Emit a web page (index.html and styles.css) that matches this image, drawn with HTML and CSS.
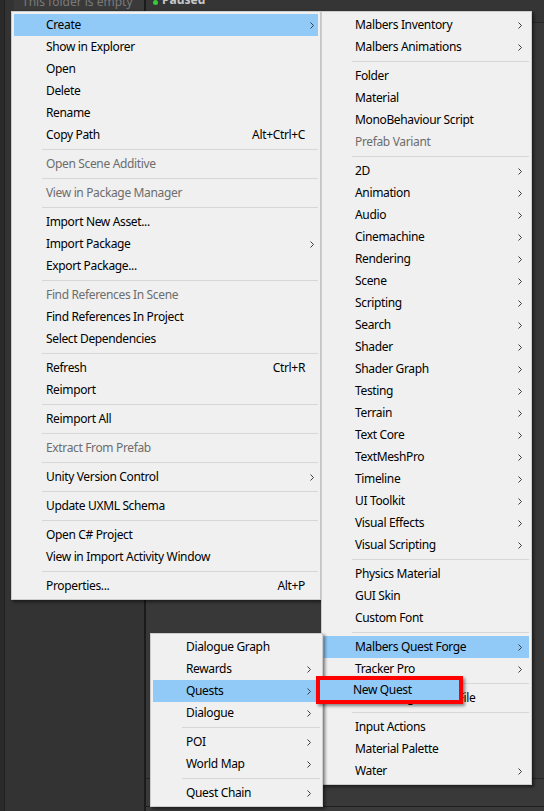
FILE: index.html
```html
<!DOCTYPE html>
<html>
<head>
<meta charset="utf-8">
<link rel="stylesheet" href="styles.css">
</head>
<body>
<div class="screen">
  <div class="edge"></div>
  <div class="left-pane">
    <div class="empty-label">This folder is empty</div>
  </div>
  <div class="divider"></div>
  <div class="right-pane">
    <div class="top-bar"><span class="dot"></span><span class="status">Paused</span></div>
    <div class="content"></div>
    <div class="bottom-bar"><span class="bar-icon"></span></div>
    <div class="footer"></div>
  </div>

  <div class="menu menu-main">
    <div class="item hl"><span class="label">Create</span><span class="arrow"><svg width="4" height="7" viewBox="0 0 4 7"><path d="M0.5 0.5 L3.5 3.5 L0.5 6.5" /></svg></span></div>
    <div class="item"><span class="label">Show in Explorer</span></div>
    <div class="item"><span class="label">Open</span></div>
    <div class="item"><span class="label">Delete</span></div>
    <div class="item"><span class="label">Rename</span></div>
    <div class="item"><span class="label">Copy Path</span><span class="shortcut">Alt+Ctrl+C</span></div>
    <div class="sep"></div>
    <div class="item disabled"><span class="label">Open Scene Additive</span></div>
    <div class="sep"></div>
    <div class="item disabled"><span class="label">View in Package Manager</span></div>
    <div class="sep"></div>
    <div class="item"><span class="label">Import New Asset...</span></div>
    <div class="item"><span class="label">Import Package</span><span class="arrow"><svg width="4" height="7" viewBox="0 0 4 7"><path d="M0.5 0.5 L3.5 3.5 L0.5 6.5" /></svg></span></div>
    <div class="item"><span class="label">Export Package...</span></div>
    <div class="sep"></div>
    <div class="item disabled"><span class="label">Find References In Scene</span></div>
    <div class="item"><span class="label">Find References In Project</span></div>
    <div class="item"><span class="label">Select Dependencies</span></div>
    <div class="sep"></div>
    <div class="item"><span class="label">Refresh</span><span class="shortcut">Ctrl+R</span></div>
    <div class="item"><span class="label">Reimport</span></div>
    <div class="sep"></div>
    <div class="item"><span class="label">Reimport All</span></div>
    <div class="sep"></div>
    <div class="item disabled"><span class="label">Extract From Prefab</span></div>
    <div class="sep"></div>
    <div class="item"><span class="label">Unity Version Control</span><span class="arrow"><svg width="4" height="7" viewBox="0 0 4 7"><path d="M0.5 0.5 L3.5 3.5 L0.5 6.5" /></svg></span></div>
    <div class="sep"></div>
    <div class="item"><span class="label">Update UXML Schema</span></div>
    <div class="sep"></div>
    <div class="item"><span class="label">Open C# Project</span></div>
    <div class="item"><span class="label">View in Import Activity Window</span></div>
    <div class="sep"></div>
    <div class="item"><span class="label">Properties...</span><span class="shortcut">Alt+P</span></div>
  </div>

  <div class="menu menu-create">
    <div class="item"><span class="label">Malbers Inventory</span><span class="arrow"><svg width="4" height="7" viewBox="0 0 4 7"><path d="M0.5 0.5 L3.5 3.5 L0.5 6.5" /></svg></span></div>
    <div class="item"><span class="label">Malbers Animations</span><span class="arrow"><svg width="4" height="7" viewBox="0 0 4 7"><path d="M0.5 0.5 L3.5 3.5 L0.5 6.5" /></svg></span></div>
    <div class="sep"></div>
    <div class="item"><span class="label">Folder</span></div>
    <div class="item"><span class="label">Material</span></div>
    <div class="item"><span class="label">MonoBehaviour Script</span></div>
    <div class="item disabled"><span class="label">Prefab Variant</span></div>
    <div class="sep"></div>
    <div class="item"><span class="label">2D</span><span class="arrow"><svg width="4" height="7" viewBox="0 0 4 7"><path d="M0.5 0.5 L3.5 3.5 L0.5 6.5" /></svg></span></div>
    <div class="item"><span class="label">Animation</span><span class="arrow"><svg width="4" height="7" viewBox="0 0 4 7"><path d="M0.5 0.5 L3.5 3.5 L0.5 6.5" /></svg></span></div>
    <div class="item"><span class="label">Audio</span><span class="arrow"><svg width="4" height="7" viewBox="0 0 4 7"><path d="M0.5 0.5 L3.5 3.5 L0.5 6.5" /></svg></span></div>
    <div class="item"><span class="label">Cinemachine</span><span class="arrow"><svg width="4" height="7" viewBox="0 0 4 7"><path d="M0.5 0.5 L3.5 3.5 L0.5 6.5" /></svg></span></div>
    <div class="item"><span class="label">Rendering</span><span class="arrow"><svg width="4" height="7" viewBox="0 0 4 7"><path d="M0.5 0.5 L3.5 3.5 L0.5 6.5" /></svg></span></div>
    <div class="item"><span class="label">Scene</span><span class="arrow"><svg width="4" height="7" viewBox="0 0 4 7"><path d="M0.5 0.5 L3.5 3.5 L0.5 6.5" /></svg></span></div>
    <div class="item"><span class="label">Scripting</span><span class="arrow"><svg width="4" height="7" viewBox="0 0 4 7"><path d="M0.5 0.5 L3.5 3.5 L0.5 6.5" /></svg></span></div>
    <div class="item"><span class="label">Search</span><span class="arrow"><svg width="4" height="7" viewBox="0 0 4 7"><path d="M0.5 0.5 L3.5 3.5 L0.5 6.5" /></svg></span></div>
    <div class="item"><span class="label">Shader</span><span class="arrow"><svg width="4" height="7" viewBox="0 0 4 7"><path d="M0.5 0.5 L3.5 3.5 L0.5 6.5" /></svg></span></div>
    <div class="item"><span class="label">Shader Graph</span><span class="arrow"><svg width="4" height="7" viewBox="0 0 4 7"><path d="M0.5 0.5 L3.5 3.5 L0.5 6.5" /></svg></span></div>
    <div class="item"><span class="label">Testing</span><span class="arrow"><svg width="4" height="7" viewBox="0 0 4 7"><path d="M0.5 0.5 L3.5 3.5 L0.5 6.5" /></svg></span></div>
    <div class="item"><span class="label">Terrain</span><span class="arrow"><svg width="4" height="7" viewBox="0 0 4 7"><path d="M0.5 0.5 L3.5 3.5 L0.5 6.5" /></svg></span></div>
    <div class="item"><span class="label">Text Core</span><span class="arrow"><svg width="4" height="7" viewBox="0 0 4 7"><path d="M0.5 0.5 L3.5 3.5 L0.5 6.5" /></svg></span></div>
    <div class="item"><span class="label">TextMeshPro</span><span class="arrow"><svg width="4" height="7" viewBox="0 0 4 7"><path d="M0.5 0.5 L3.5 3.5 L0.5 6.5" /></svg></span></div>
    <div class="item"><span class="label">Timeline</span><span class="arrow"><svg width="4" height="7" viewBox="0 0 4 7"><path d="M0.5 0.5 L3.5 3.5 L0.5 6.5" /></svg></span></div>
    <div class="item"><span class="label">UI Toolkit</span><span class="arrow"><svg width="4" height="7" viewBox="0 0 4 7"><path d="M0.5 0.5 L3.5 3.5 L0.5 6.5" /></svg></span></div>
    <div class="item"><span class="label">Visual Effects</span><span class="arrow"><svg width="4" height="7" viewBox="0 0 4 7"><path d="M0.5 0.5 L3.5 3.5 L0.5 6.5" /></svg></span></div>
    <div class="item"><span class="label">Visual Scripting</span><span class="arrow"><svg width="4" height="7" viewBox="0 0 4 7"><path d="M0.5 0.5 L3.5 3.5 L0.5 6.5" /></svg></span></div>
    <div class="sep"></div>
    <div class="item"><span class="label">Physics Material</span></div>
    <div class="item"><span class="label">GUI Skin</span></div>
    <div class="item"><span class="label">Custom Font</span></div>
    <div class="sep"></div>
    <div class="item hl"><span class="label">Malbers Quest Forge</span><span class="arrow"><svg width="4" height="7" viewBox="0 0 4 7"><path d="M0.5 0.5 L3.5 3.5 L0.5 6.5" /></svg></span></div>
    <div class="item"><span class="label">Tracker Pro</span><span class="arrow"><svg width="4" height="7" viewBox="0 0 4 7"><path d="M0.5 0.5 L3.5 3.5 L0.5 6.5" /></svg></span></div>
    <div class="sep"></div>
    <div class="item"><span class="label">Quest Forge Saved File</span></div>
    <div class="sep"></div>
    <div class="item"><span class="label">Input Actions</span></div>
    <div class="item"><span class="label">Material Palette</span></div>
    <div class="item"><span class="label">Water</span><span class="arrow"><svg width="4" height="7" viewBox="0 0 4 7"><path d="M0.5 0.5 L3.5 3.5 L0.5 6.5" /></svg></span></div>
  </div>

  <div class="menu menu-quest">
    <div class="item"><span class="label">Dialogue Graph</span></div>
    <div class="item"><span class="label">Rewards</span><span class="arrow"><svg width="4" height="7" viewBox="0 0 4 7"><path d="M0.5 0.5 L3.5 3.5 L0.5 6.5" /></svg></span></div>
    <div class="item hl"><span class="label">Quests</span><span class="arrow"><svg width="4" height="7" viewBox="0 0 4 7"><path d="M0.5 0.5 L3.5 3.5 L0.5 6.5" /></svg></span></div>
    <div class="item"><span class="label">Dialogue</span><span class="arrow"><svg width="4" height="7" viewBox="0 0 4 7"><path d="M0.5 0.5 L3.5 3.5 L0.5 6.5" /></svg></span></div>
    <div class="sep"></div>
    <div class="item"><span class="label">POI</span><span class="arrow"><svg width="4" height="7" viewBox="0 0 4 7"><path d="M0.5 0.5 L3.5 3.5 L0.5 6.5" /></svg></span></div>
    <div class="item"><span class="label">World Map</span><span class="arrow"><svg width="4" height="7" viewBox="0 0 4 7"><path d="M0.5 0.5 L3.5 3.5 L0.5 6.5" /></svg></span></div>
    <div class="sep"></div>
    <div class="item"><span class="label">Quest Chain</span><span class="arrow"><svg width="4" height="7" viewBox="0 0 4 7"><path d="M0.5 0.5 L3.5 3.5 L0.5 6.5" /></svg></span></div>
  </div>

  <div class="new-quest"><span class="label">New Quest</span></div>
</div>
</body>
</html>
```

FILE: styles.css
```css
html, body {
  margin: 0;
  padding: 0;
}
body {
  background: #333333;
  font-family: "Segoe UI", "Noto Sans", sans-serif;
}
.screen {
  position: relative;
  width: 544px;
  height: 811px;
  overflow: hidden;
  display: flex;
  background: #383838;
}
.edge {
  width: 4px;
  background: #2a2a2a;
  border-right: 1px solid #202020;
}
.left-pane {
  width: 139px;
  background: #333333;
}
.empty-label {
  margin: -6px 0 0 9px;
  width: 126px;
  padding-left: 8px;
  line-height: 16px;
  height: 16px;
  font-size: 12px;
  color: #7a7a7a;
  background: #3a3a3a;
}
.divider {
  width: 2px;
  background: #1b1b1b;
}
.right-pane {
  flex: 1;
  display: flex;
  flex-direction: column;
}
.top-bar {
  height: 29px;
  border-bottom: 1px solid #262626;
  background: #353535;
  display: flex;
  align-items: flex-start;
  margin-top: -7px;
  padding-left: 7px;
  gap: 4px;
}
.dot {
  width: 5px;
  height: 5px;
  border-radius: 50%;
  background: #38c938;
  margin-top: 7px;
}
.status {
  font-size: 12px;
  font-weight: bold;
  color: #c8c8c8;
  line-height: 14px;
}
.content {
  flex: 1;
  background: #383838;
}
.bottom-bar {
  height: 27px;
  border-top: 1px solid #262626;
  border-bottom: 1px solid #1f1f1f;
  background: #393939;
  display: flex;
  align-items: center;
  padding-left: 4px;
}
.bar-icon {
  width: 6px;
  height: 6px;
  background: #6a6a6a;
  clip-path: polygon(50% 0, 100% 100%, 0 100%);
}
.footer {
  height: 4px;
  background: #3a3a3a;
}

/* menus */
.menu {
  position: absolute;
  box-sizing: border-box;
  background: #f0f0f0;
  border: 1px solid #cccccc;
  padding: 2px;
  box-shadow: 2px 2px 3px rgba(0, 0, 0, 0.5);
  font-family: "Segoe UI", "Noto Sans", sans-serif;
  font-size: 12px;
  letter-spacing: -0.35px;
  color: #000000;
}
.menu-main {
  left: 11px;
  top: 11px;
  width: 310px;
}
.menu-create {
  left: 321px;
  top: 11px;
  width: 211px;
}
.menu-quest {
  left: 150px;
  top: 633px;
  width: 173px;
}
.item {
  height: 22px;
  display: flex;
  align-items: center;
  padding-left: 32px;
  white-space: nowrap;
}
.menu-create .item {
  padding-left: 31px;
}
.menu-quest .item {
  padding-left: 33px;
}
.item.hl {
  background: #91c9f7;
}
.item.disabled {
  color: #6d6d6d;
}
.label {
  flex: 1;
  line-height: 22px;
}
.shortcut {
  margin-right: 13px;
  line-height: 22px;
}
.arrow {
  width: 4px;
  height: 7px;
  display: flex;
  margin-right: 4px;
}
.menu-create .arrow {
  margin-right: 7px;
}
.menu-quest .arrow {
  margin-right: 9px;
}
.arrow svg path {
  fill: none;
  stroke: #3c3c3c;
  stroke-width: 1;
}
.sep {
  height: 1px;
  margin: 3px 0 3px 28px;
  background: #d7d7d7;
}
.menu-quest .sep {
  margin-left: 29px;
}

.new-quest {
  position: absolute;
  left: 316px;
  top: 676px;
  width: 147px;
  height: 28px;
  box-sizing: border-box;
  border: 4px solid #ff0000;
  background: #91c9f7;
  box-shadow: 2px 2px 3px rgba(0, 0, 0, 0.45);
  display: flex;
  align-items: center;
  padding-left: 33px;
  font-family: "Segoe UI", "Noto Sans", sans-serif;
  font-size: 12px;
  letter-spacing: -0.35px;
  color: #000000;
}
```
